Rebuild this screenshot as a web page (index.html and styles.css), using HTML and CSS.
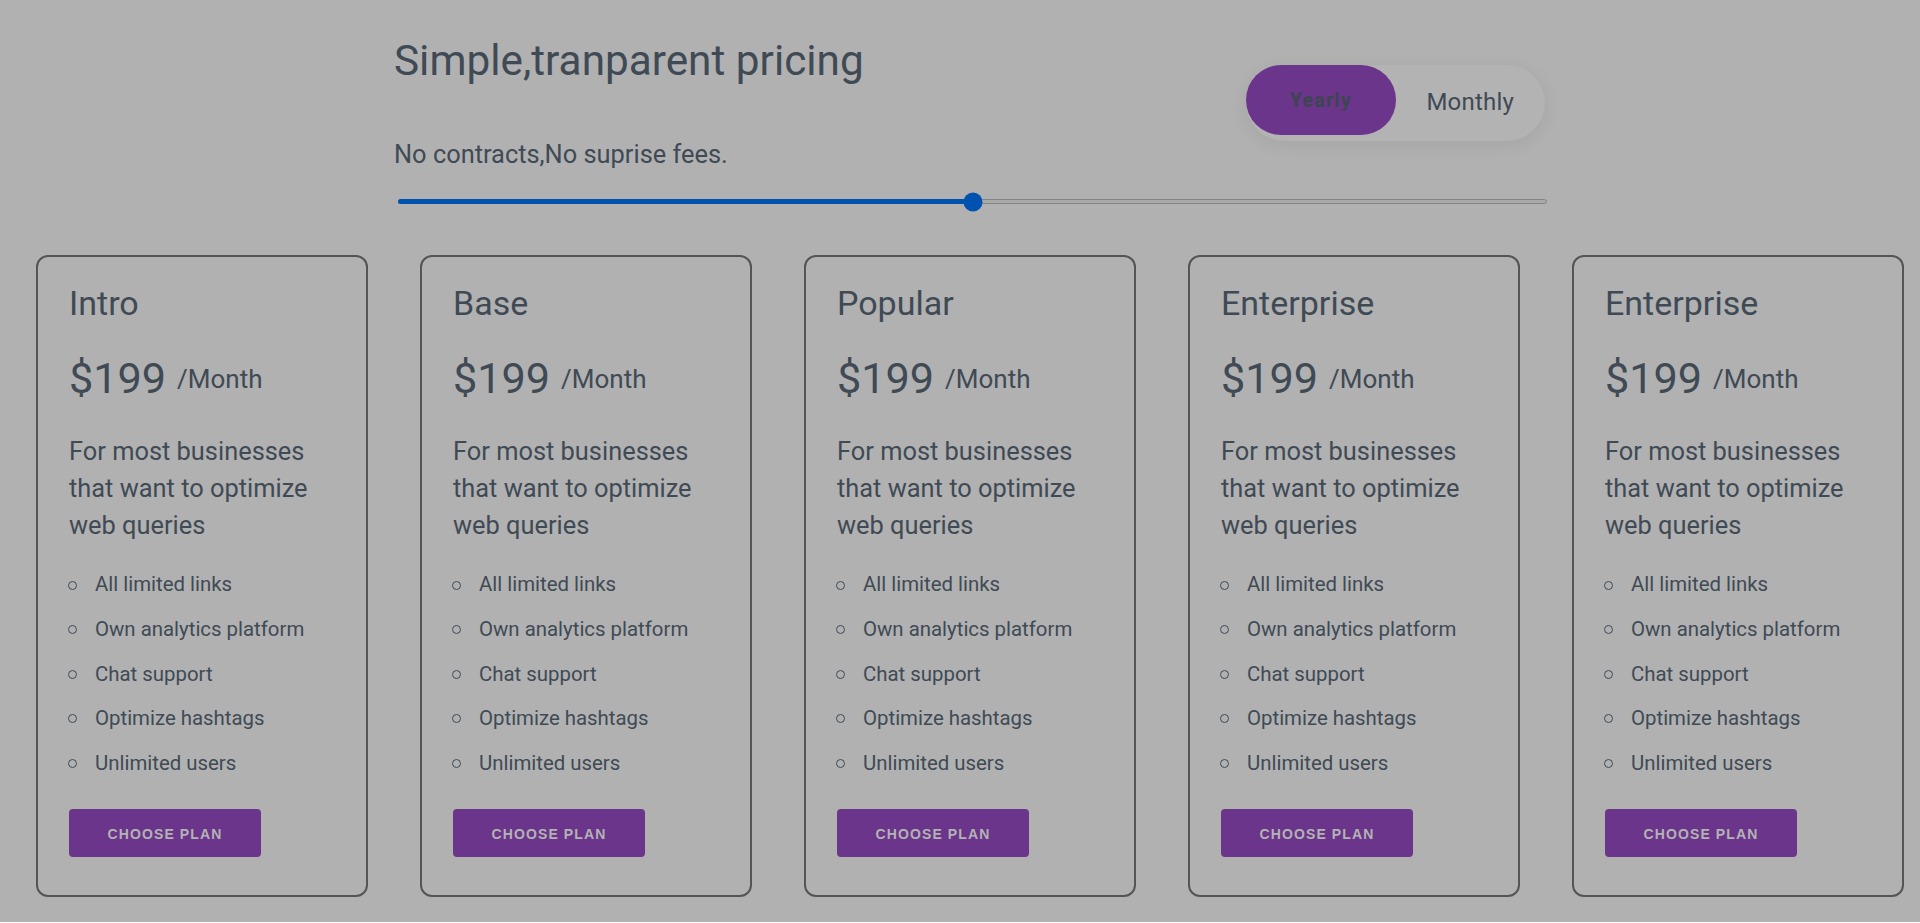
FILE: index.html
```html
<!DOCTYPE html>
<html lang="en">
<head>
<meta charset="utf-8">
<title>Pricing</title>
<link rel="stylesheet" href="styles.css">
</head>
<body>
<div class="page">
  <header class="hero">
    <div class="hero-top">
      <div class="hero-text">
        <h1 class="title">Simple,tranparent pricing</h1>
        <p class="subtitle">No contracts,No suprise fees.</p>
      </div>
      <div class="toggle">
        <button class="toggle-btn active">Yearly</button>
        <button class="toggle-btn">Monthly</button>
      </div>
    </div>
    <div class="slider">
      <div class="track">
        <div class="fill" style="width:50%"></div>
        <div class="thumb" style="left:50%"></div>
      </div>
    </div>
  </header>

  <section class="cards">
    <div class="card">
      <h2 class="plan-name">Intro</h2>
      <div class="price-row"><span class="price">$199</span><span class="per">/Month</span></div>
      <p class="desc">For most businesses that want to optimize web queries</p>
      <ul class="features">
        <li>All limited links</li>
        <li>Own analytics platform</li>
        <li>Chat support</li>
        <li>Optimize hashtags</li>
        <li>Unlimited users</li>
      </ul>
      <button class="choose">CHOOSE PLAN</button>
    </div>
    <div class="card">
      <h2 class="plan-name">Base</h2>
      <div class="price-row"><span class="price">$199</span><span class="per">/Month</span></div>
      <p class="desc">For most businesses that want to optimize web queries</p>
      <ul class="features">
        <li>All limited links</li>
        <li>Own analytics platform</li>
        <li>Chat support</li>
        <li>Optimize hashtags</li>
        <li>Unlimited users</li>
      </ul>
      <button class="choose">CHOOSE PLAN</button>
    </div>
    <div class="card">
      <h2 class="plan-name">Popular</h2>
      <div class="price-row"><span class="price">$199</span><span class="per">/Month</span></div>
      <p class="desc">For most businesses that want to optimize web queries</p>
      <ul class="features">
        <li>All limited links</li>
        <li>Own analytics platform</li>
        <li>Chat support</li>
        <li>Optimize hashtags</li>
        <li>Unlimited users</li>
      </ul>
      <button class="choose">CHOOSE PLAN</button>
    </div>
    <div class="card">
      <h2 class="plan-name">Enterprise</h2>
      <div class="price-row"><span class="price">$199</span><span class="per">/Month</span></div>
      <p class="desc">For most businesses that want to optimize web queries</p>
      <ul class="features">
        <li>All limited links</li>
        <li>Own analytics platform</li>
        <li>Chat support</li>
        <li>Optimize hashtags</li>
        <li>Unlimited users</li>
      </ul>
      <button class="choose">CHOOSE PLAN</button>
    </div>
    <div class="card">
      <h2 class="plan-name">Enterprise</h2>
      <div class="price-row"><span class="price">$199</span><span class="per">/Month</span></div>
      <p class="desc">For most businesses that want to optimize web queries</p>
      <ul class="features">
        <li>All limited links</li>
        <li>Own analytics platform</li>
        <li>Chat support</li>
        <li>Optimize hashtags</li>
        <li>Unlimited users</li>
      </ul>
      <button class="choose">CHOOSE PLAN</button>
    </div>
  </section>
</div>
</body>
</html>
```
FILE: styles.css
```css
* { box-sizing: border-box; }

html, body {
  margin: 0;
  padding: 0;
  background: #ffffff;
}

body {
  font-family: Roboto, "Liberation Sans", Arial, sans-serif;
  color: #3f4a55;
}

.page {
  height: 922px;
  background: #b1b1b1;
  overflow: hidden;
}

/* ---------- hero ---------- */
.hero {
  margin-left: 392px;
  width: 1155px;
  padding-top: 36px;
}

.hero-top {
  display: flex;
  justify-content: space-between;
  align-items: flex-start;
}

.hero-text {
  padding-left: 2px;
}

.title {
  margin: 0;
  font-size: 42.3px;
  line-height: 50px;
  font-weight: 400;
  color: #3f4a55;
}

.subtitle {
  margin: 52.5px 0 0;
  font-size: 25.4px;
  line-height: 30px;
  color: #3f4a55;
}

.toggle {
  margin-top: 29px;
  margin-right: 2px;
  width: 299px;
  height: 76px;
  border-radius: 38px;
  background: #b3b3b3;
  box-shadow: 0 4px 18px rgba(0, 0, 0, 0.07);
  display: flex;
  align-items: flex-start;
}

.toggle-btn {
  width: 150px;
  height: 70px;
  border: none;
  border-radius: 35px;
  background: transparent;
  font-family: Roboto, "Liberation Sans", sans-serif;
  font-size: 24px;
  letter-spacing: 0.2px;
  color: #3f4a55;
  padding: 3px 0 0;
  cursor: pointer;
}

.toggle-btn.active {
  background: #6b358b;
  font-size: 20px;
  font-weight: 700;
  letter-spacing: 1px;
  color: #3c4651;
  padding: 0;
}

/* ---------- slider ---------- */
.slider {
  margin-top: 23px;
  margin-left: 6px;
  height: 20px;
  display: flex;
  align-items: center;
}

.track {
  position: relative;
  width: 100%;
  height: 5px;
  border: 1px solid #858585;
  border-radius: 3px;
  background: #a9a9a9;
}

.fill {
  position: absolute;
  left: -1px;
  top: -1px;
  height: 5px;
  border-radius: 3px;
  background: #0052b1;
}

.thumb {
  position: absolute;
  top: 50%;
  width: 19px;
  height: 19px;
  border-radius: 50%;
  background: #0052b1;
  transform: translate(-50%, -50%);
}

/* ---------- cards ---------- */
.cards {
  display: flex;
  gap: 52px;
  padding-left: 36px;
  margin-top: 43.5px;
}

.card {
  width: 332px;
  flex: 0 0 332px;
  border: 2px solid #555555;
  border-radius: 12px;
  padding: 26px 30px 38px 31px;
}

.plan-name {
  margin: 0;
  font-size: 34px;
  line-height: 40px;
  font-weight: 400;
}

.price-row {
  margin-top: 29.6px;
  display: flex;
  align-items: center;
}

.price {
  font-size: 43.2px;
  line-height: 52px;
}

.per {
  margin-left: 11px;
  font-size: 26px;
  line-height: 32px;
}

.desc {
  margin: 28.5px 0 0;
  font-size: 25.4px;
  line-height: 36.7px;
}

.features {
  list-style: none;
  margin: 19.2px 0 0;
  padding: 0;
}

.features li {
  display: flex;
  align-items: center;
  font-size: 20.4px;
  line-height: 44.6px;
}

.features li::before {
  content: "";
  width: 7px;
  height: 7px;
  border: 1.4px solid #3f4a55;
  border-radius: 50%;
  margin: 1px 18px 0 -1px;
  flex: 0 0 7px;
}

.choose {
  display: block;
  margin: 23.5px 0 0;
  width: 192px;
  height: 48px;
  border: none;
  border-radius: 4px;
  background: #6b358b;
  color: #b3b3b3;
  font-family: "Liberation Sans", Arial, sans-serif;
  font-size: 14px;
  font-weight: 700;
  letter-spacing: 1.1px;
  padding: 3px 0 0;
  cursor: pointer;
}
```
